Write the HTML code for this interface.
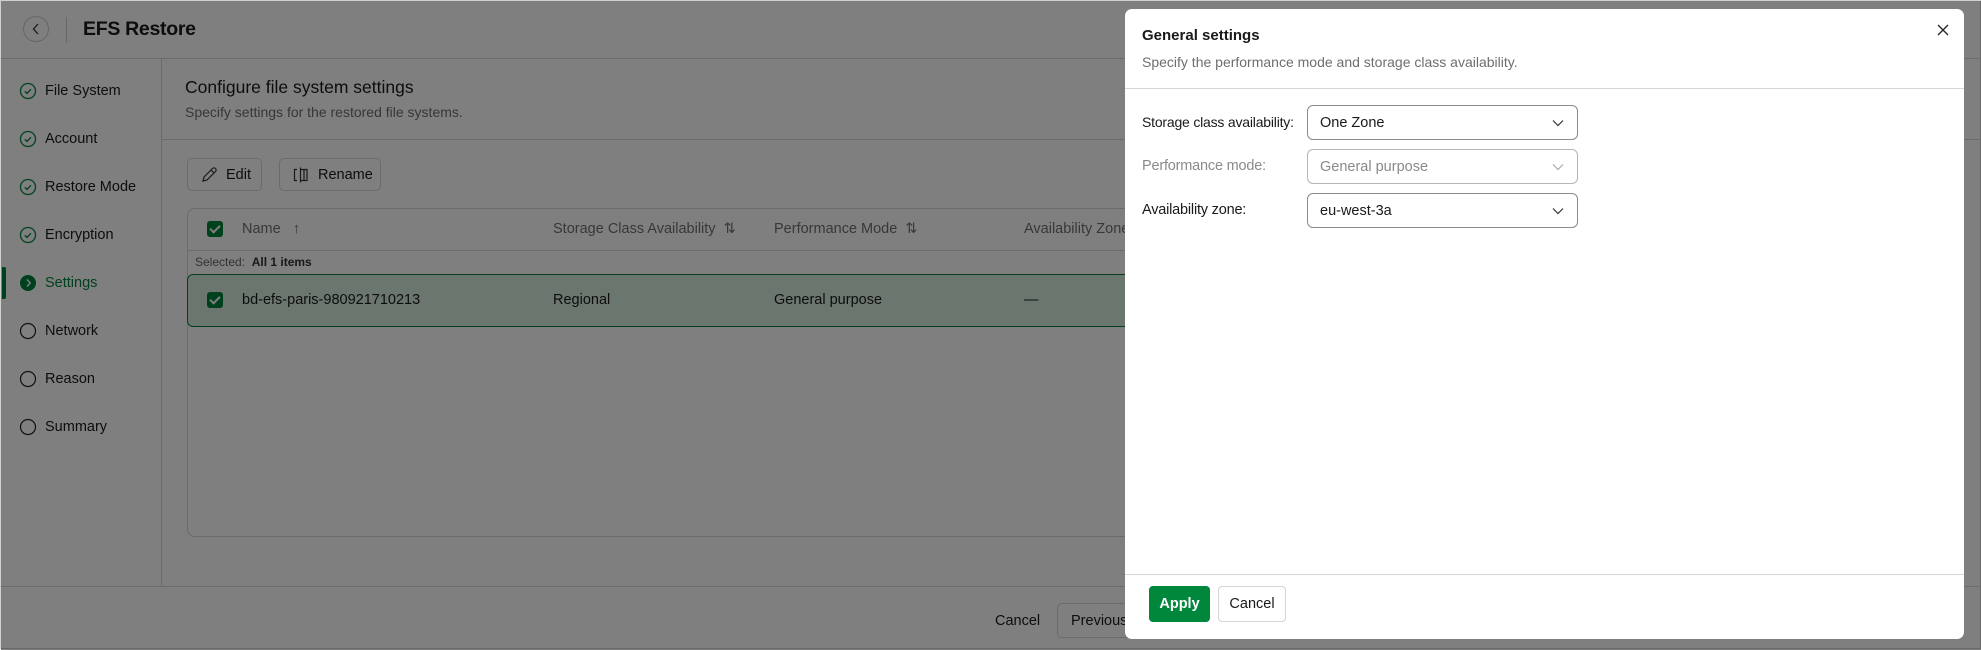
<!DOCTYPE html>
<html><head><meta charset="utf-8"><style>
*{box-sizing:border-box;margin:0;padding:0}
body{width:1981px;height:649px;position:relative;overflow:hidden;font-family:"Liberation Sans",sans-serif;background:#fff;color:#1a1a1a;border:1px solid #d0d0d0}
.a{position:absolute}
.side{font-size:14.5px}
.btn{position:absolute;border:1px solid #d6d6d6;border-radius:5px;background:#fff;font-size:14.5px;display:flex;align-items:center;white-space:nowrap}
.cb{position:absolute;width:16px;height:16px;border-radius:3px;background:#00823b}
.cb:after{content:"";position:absolute;left:5px;top:2px;width:4px;height:8px;border:solid #fff;border-width:0 2px 2px 0;transform:rotate(45deg)}
.th{position:absolute;top:220px;font-size:14.5px;color:#707070;white-space:nowrap}
.td{position:absolute;top:291px;font-size:14.5px}
.sel{position:absolute;left:1306px;width:271px;height:35px;border:1px solid #8a8a8a;border-radius:6px;font-size:14.5px;padding-left:12px;display:flex;align-items:center}
.sel svg{position:absolute;right:13px;top:13px}
.lbl{position:absolute;left:1141px;font-size:14.5px;letter-spacing:-0.2px;white-space:nowrap}
</style></head><body>
<div class="a" style="left:22px;top:15px;width:26px;height:26px;border:1px solid #ccc;border-radius:50%"></div>
<svg class="a" style="left:31px;top:22px" width="8" height="12"><path d="M6 1L1.5 6L6 11" stroke="#333" fill="none" stroke-width="1.3"/></svg>
<div class="a" style="left:65px;top:16px;width:1px;height:26px;background:#ccc"></div>
<div class="a" style="left:82px;top:17px;font-size:19.5px;font-weight:bold;letter-spacing:-0.3px">EFS Restore</div>
<div class="a" style="left:0;top:57px;width:1981px;height:1px;background:#d6d6d6"></div>
<div class="a" style="left:160px;top:57px;width:1px;height:528px;background:#d6d6d6"></div>
<div class="a side" style="left:0;top:0">
<svg class="a" style="left:18px;top:81px" width="18" height="18"><circle cx="9" cy="9" r="7.5" stroke="#00823b" fill="none" stroke-width="1.3"/><path d="M5.8 9.2l2.2 2.2 4-4.2" stroke="#00823b" fill="none" stroke-width="1.3"/></svg>
<div class="a" style="left:44px;top:82px;white-space:nowrap">File System</div>
<svg class="a" style="left:18px;top:129px" width="18" height="18"><circle cx="9" cy="9" r="7.5" stroke="#00823b" fill="none" stroke-width="1.3"/><path d="M5.8 9.2l2.2 2.2 4-4.2" stroke="#00823b" fill="none" stroke-width="1.3"/></svg>
<div class="a" style="left:44px;top:130px;white-space:nowrap">Account</div>
<svg class="a" style="left:18px;top:177px" width="18" height="18"><circle cx="9" cy="9" r="7.5" stroke="#00823b" fill="none" stroke-width="1.3"/><path d="M5.8 9.2l2.2 2.2 4-4.2" stroke="#00823b" fill="none" stroke-width="1.3"/></svg>
<div class="a" style="left:44px;top:178px;white-space:nowrap">Restore Mode</div>
<svg class="a" style="left:18px;top:225px" width="18" height="18"><circle cx="9" cy="9" r="7.5" stroke="#00823b" fill="none" stroke-width="1.3"/><path d="M5.8 9.2l2.2 2.2 4-4.2" stroke="#00823b" fill="none" stroke-width="1.3"/></svg>
<div class="a" style="left:44px;top:226px;white-space:nowrap">Encryption</div>
<div class="a" style="left:1px;top:266px;width:4px;height:32px;background:#00823b;border-radius:0 2px 2px 0"></div>
<svg class="a" style="left:18px;top:273px" width="18" height="18"><circle cx="9" cy="9" r="8" fill="#00823b"/><path d="M8 5.5l3.2 3.5L8 12.5" stroke="#fff" fill="none" stroke-width="1.4"/></svg>
<div class="a" style="left:44px;top:274px;color:#00823b;white-space:nowrap">Settings</div>
<svg class="a" style="left:18px;top:321px" width="18" height="18"><circle cx="9" cy="9" r="7.5" stroke="#222" fill="none" stroke-width="1.2"/></svg>
<div class="a" style="left:44px;top:322px">Network</div>
<svg class="a" style="left:18px;top:369px" width="18" height="18"><circle cx="9" cy="9" r="7.5" stroke="#222" fill="none" stroke-width="1.2"/></svg>
<div class="a" style="left:44px;top:370px">Reason</div>
<svg class="a" style="left:18px;top:417px" width="18" height="18"><circle cx="9" cy="9" r="7.5" stroke="#222" fill="none" stroke-width="1.2"/></svg>
<div class="a" style="left:44px;top:418px">Summary</div>
</div>
<div class="a" style="left:184px;top:76px;font-size:17.5px">Configure file system settings</div>
<div class="a" style="left:184px;top:103px;font-size:14px;color:#6e6e6e">Specify settings for the restored file systems.</div>
<div class="a" style="left:161px;top:138px;width:1820px;height:1px;background:#d6d6d6"></div>
<div class="btn" style="left:186px;top:157px;width:75px;height:33px;padding-left:12px">
<svg width="18" height="18" style="margin-right:8px"><path d="M3 15l1-4 8.5-8.5a2 2 0 0 1 3 3L7 14z M11 4l3 3" stroke="#333" fill="none" stroke-width="1.2"/></svg>Edit</div>
<div class="btn" style="left:278px;top:157px;width:102px;height:33px;padding-left:12px">
<svg width="18" height="18" style="margin-right:8px"><path d="M5 3.5h-2.5v11h2.5 M12 3.5h3v11h-3 M8.5 1.5v15 M8.5 3.5h3.5v11h-3.5" stroke="#333" fill="none" stroke-width="1.2"/></svg>Rename</div>
<div class="a" style="left:186px;top:207px;width:1700px;height:329px;border:1px solid #d6d6d6;border-radius:8px"></div>
<div class="a" style="left:187px;top:249px;width:1698px;height:1px;background:#d6d6d6"></div>
<div class="cb" style="left:206px;top:220px"></div>
<div class="th" style="left:241px">Name &nbsp;&nbsp;↑</div>
<div class="th" style="left:552px">Storage Class Availability &nbsp;⇅</div>
<div class="th" style="left:773px">Performance Mode &nbsp;⇅</div>
<div class="th" style="left:1023px">Availability Zone</div>
<div class="a" style="left:194px;top:254px;font-size:12px;color:#666">Selected: &nbsp;<b style="color:#333">All 1 items</b></div>
<div class="a" style="left:186px;top:273px;width:1700px;height:53px;background:#d6ecdd;border:1px solid #0b7a3b;border-radius:6px"></div>
<div class="cb" style="left:206px;top:291px"></div>
<div class="td" style="left:241px">bd-efs-paris-980921710213</div>
<div class="td" style="left:552px">Regional</div>
<div class="td" style="left:773px">General purpose</div>
<div class="td" style="left:1023px">—</div>
<div class="a" style="left:0;top:585px;width:1981px;height:1px;background:#d6d6d6"></div>
<div class="a" style="left:994px;top:612px;font-size:14.5px">Cancel</div>
<div class="btn" style="left:1056px;top:602px;width:120px;height:35px;padding-left:13px">Previous</div>
<div class="a" style="left:0;top:0;width:1981px;height:649px;background:rgba(0,0,0,0.5)"></div>
<div class="a" style="left:1124px;top:8px;width:839px;height:630px;background:#fff;border-radius:7px"></div>
<div class="a" style="left:1141px;top:26px;font-size:15px;font-weight:bold">General settings</div>
<div class="a" style="left:1141px;top:53px;font-size:14px;color:#6e6e6e">Specify the performance mode and storage class availability.</div>
<svg class="a" style="left:1936px;top:23px" width="12" height="12"><path d="M1 1L11 11M11 1L1 11" stroke="#222" stroke-width="1.3"/></svg>
<div class="a" style="left:1124px;top:87px;width:839px;height:1px;background:#d6d6d6"></div>
<div class="lbl" style="top:113px;font-size:14px">Storage class availability:</div>
<div class="sel" style="top:104px">One Zone<svg width="12" height="8"><path d="M1 1.5l5 5 5-5" stroke="#333" fill="none" stroke-width="1.2"/></svg></div>
<div class="lbl" style="top:157px;color:#8a8a8a">Performance mode:</div>
<div class="sel" style="top:148px;color:#8a8a8a;border-color:#b5b5b5">General purpose<svg width="12" height="8"><path d="M1 1.5l5 5 5-5" stroke="#aaa" fill="none" stroke-width="1.2"/></svg></div>
<div class="lbl" style="top:201px">Availability zone:</div>
<div class="sel" style="top:192px">eu-west-3a<svg width="12" height="8"><path d="M1 1.5l5 5 5-5" stroke="#333" fill="none" stroke-width="1.2"/></svg></div>
<div class="a" style="left:1124px;top:573px;width:839px;height:1px;background:#d6d6d6"></div>
<div class="a" style="left:1148px;top:585px;width:61px;height:36px;background:#00873c;border-radius:4px;color:#fff;font-size:14.5px;font-weight:bold;display:flex;align-items:center;justify-content:center">Apply</div>
<div class="a" style="left:1217px;top:585px;width:68px;height:36px;border:1px solid #d6d6d6;border-radius:4px;font-size:14.5px;display:flex;align-items:center;justify-content:center">Cancel</div>
</body></html>
